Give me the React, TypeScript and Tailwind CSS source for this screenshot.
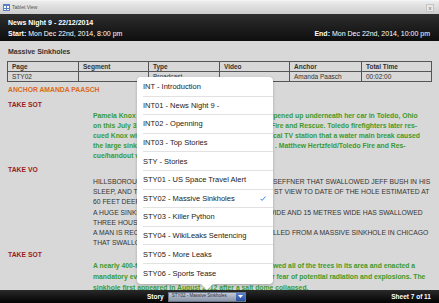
import React, { FC } from "react";

const stories = [
  "INT - Introduction",
  "INT01 - News Night 9 -",
  "INT02 - Openning",
  "INT03 - Top Stories",
  "STY - Stories",
  "STY01 - US Space Travel Alert",
  "STY02 - Massive Sinkholes",
  "STY03 - Killer Python",
  "STY04 - WikiLeaks Sentencing",
  "STY05 - More Leaks",
  "STY06 - Sports Tease",
];

// each script line: left part, where the rest continues (w), rest of the line
type Line = { l: string; w?: string; r?: string };

const greenOne: Line[] = [
  { l: "Pamela Knox was pulled from a sinkhole that ", w: "w-[176px]", r: "opened up underneath her car in Toledo, Ohio" },
  { l: "on this July 3, 2014 photo by Toledo ", w: "w-[178px]", r: "Fire and Rescue. Toledo firefighters later res-" },
  { l: "cued Knox without injury. Officials told a lo", w: "w-[180px]", r: "cal TV station that a water main break caused" },
  { l: "the large sinkhole in the street", w: "w-[182px]", r: ". Matthew Hertzfeld/Toledo Fire and Res-" },
  { l: "cue/handout via Reuters" },
];

const caps: Line[] = [
  { l: "HILLSBOROUGH COUNTY VIDEO OF THE SINKHOLE IN ", w: "w-[180px]", r: "SEFFNER THAT SWALLOWED JEFF BUSH IN HIS" },
  { l: "SLEEP, AND THIS IS THE CLOSE", w: "w-[181px]", r: "ST VIEW TO DATE OF THE HOLE ESTIMATED AT" },
  { l: "60 FEET DEEP." },
  { l: "A HUGE SINKHOLE 30 METRES DEEP, 20 METRES ", w: "w-[175px]", r: "WIDE AND 15 METRES WIDE HAS SWALLOWED" },
  { l: "THREE HOUSES." },
  { l: "A MAN IS RECOVERING AFTER HE WAS PU", w: "w-[180px]", r: "LLED FROM A MASSIVE SINKHOLE IN CHICAGO" },
  { l: "THAT SWALLOWED HIS CAR." },
];

const greenTwo: Line[] = [
  { l: "A nearly 400-foot-wide sinkhole has swallo", w: "w-[180px]", r: "wed all of the trees in its area and enacted a" },
  { l: "mandatory evacuation order fo", w: "w-[179px]", r: "r fear of potential radiation and explosions. The" },
  { l: "sinkhole first appeared in August 2012 after a salt dome collapsed." },
];

type LinesProps = { lines: Line[]; className: string };

const Lines: FC<LinesProps> = ({ lines, className }) => (
  <div className={`ml-[86px] ${className}`}>
    {lines.map((line) => (
      <div key={line.l} className="flex whitespace-nowrap">
        <span className={line.w ? `${line.w} shrink-0 overflow-hidden` : ""}>{line.l}</span>
        {line.r ? <span>{line.r}</span> : null}
      </div>
    ))}
  </div>
);

const Cue: FC<{ label: string }> = ({ label }) => (
  <div className="pl-px font-bold text-[#9c1c1c]">{label}</div>
);

export default function App() {
  return (
    <div className="relative flex h-[303px] w-[439px] flex-col overflow-hidden bg-[#d8d8d8] font-['Liberation_Sans',Arial,sans-serif]">
      {/* window title */}
      <div className="flex h-[14px] items-center justify-between border-t border-[#f4f4f4] bg-gradient-to-b from-[#ececec] to-[#cdcdcd] px-[3px]">
        <div className="flex items-center gap-[2px]">
          <svg width="7" height="7" viewBox="0 0 7 7">
            <rect x="0" y="0" width="7" height="7" fill="#5a7fc4" />
            <rect x="1" y="2" width="2" height="2" fill="#fff" />
            <rect x="4" y="2" width="2" height="2" fill="#fff" />
            <rect x="1" y="5" width="2" height="1" fill="#fff" />
            <rect x="4" y="5" width="2" height="1" fill="#fff" />
          </svg>
          <span className="text-[5px] text-[#555]">Tablet View</span>
        </div>
        <div className="mr-[2px] flex h-[8px] w-[8px] items-center justify-center border border-[#c4c4c4] bg-[#e8e8e8] text-[6px] leading-none text-[#666]">
          x
        </div>
      </div>

      {/* show header */}
      <div className="h-[27px] bg-gradient-to-b from-[#2e2e2e] to-[#0e0e0e] px-[8px] pt-[3px] text-[7px] leading-[11px] text-white">
        <div className="font-bold">News Night 9 - 22/12/2014</div>
        <div className="flex justify-between pr-[1px]">
          <span>
            <b>Start:</b> Mon Dec 22nd, 2014, 8:00 pm
          </span>
          <span>
            <b>End:</b> Mon Dec 22nd, 2014, 10:00 pm
          </span>
        </div>
      </div>

      {/* script */}
      <div className="flex-1 overflow-hidden px-[7px] pt-[6px] text-[6.8px] leading-[10px]">
        <div className="pl-px text-[7px] font-bold text-[#333]">Massive Sinkholes</div>
        <table className="mt-[4px] w-[425px] table-fixed border-collapse text-[6.5px] leading-[9px] text-[#333]">
          <thead>
            <tr className="font-bold">
              <td className="w-[71px] border border-[#555] pl-[4px]">Page</td>
              <td className="w-[70px] border border-[#555] pl-[4px]">Segment</td>
              <td className="w-[71px] border border-[#555] pl-[4px]">Type</td>
              <td className="w-[70px] border border-[#555] pl-[4px]">Video</td>
              <td className="w-[72px] border border-[#555] pl-[4px]">Anchor</td>
              <td className="border border-[#555] pl-[4px]">Total Time</td>
            </tr>
          </thead>
          <tbody>
            <tr>
              <td className="border border-[#555] pl-[4px]">STY02</td>
              <td className="border border-[#555] pl-[4px]"></td>
              <td className="border border-[#555] pl-[4px]">Broadcast</td>
              <td className="border border-[#555] pl-[4px]"></td>
              <td className="border border-[#555] pl-[4px]">Amanda Paasch</td>
              <td className="border border-[#555] pl-[4px]">00:02:00</td>
            </tr>
          </tbody>
        </table>

        <div className="mt-[3px] pl-px font-bold text-[#d86a22]">ANCHOR AMANDA PAASCH</div>

        <div className="mt-[5px]">
          <Cue label="TAKE SOT" />
          <Lines lines={greenOne} className="mt-px font-bold text-[#3c9a2e]" />
        </div>

        <div className="mt-[4px]">
          <Cue label="TAKE VO" />
          <Lines lines={caps} className="mt-[2px] leading-[10.2px] text-[#333]" />
        </div>

        <div className="mt-[2px]">
          <Cue label="TAKE SOT" />
          <Lines lines={greenTwo} className="font-bold leading-[11px] text-[#3c9a2e]" />
        </div>
      </div>

      {/* footer */}
      <div className="flex h-[13px] items-center bg-gradient-to-b from-[#2a2a2a] to-[#050505] pr-[8px] text-[6.5px] font-bold text-white">
        <div className="ml-[147px] flex items-center">
          <span>Story</span>
          <div className="ml-[4px] flex h-[10px] w-[78px] items-stretch border border-[#6a7588]">
            <div className="flex flex-1 items-center bg-gradient-to-b from-[#c3cad6] to-[#8894a8] pl-[3px] text-[4.5px] font-normal text-[#2c3340]">
              STY02 - Massive Sinkholes
            </div>
            <div className="flex w-[9px] items-center justify-center bg-gradient-to-b from-[#5f82d0] to-[#2a4f9f]">
              <svg width="5" height="3" viewBox="0 0 5 3">
                <path d="M0 0h5L2.5 3z" fill="#fff" />
              </svg>
            </div>
          </div>
        </div>
        <span className="ml-auto">Sheet 7 of 11</span>
      </div>

      {/* story picker popover */}
      <div className="absolute left-[137px] top-[77px] w-[136px]">
        <div className="rounded-[4px] bg-white py-px shadow-[0_1px_3px_rgba(0,0,0,0.25)]">
          {stories.map((s, i) => (
            <div key={s} className="flex h-[18.6px] items-center pl-[6px]">
              <div
                className={`flex h-full flex-1 items-center justify-between pr-[7px] text-[7.5px] text-[#222] ${
                  i < stories.length - 1 ? "border-b border-[#e2e2e2]" : ""
                }`}
              >
                <span>{s}</span>
                {s.startsWith("STY02") ? (
                  <svg width="6" height="5" viewBox="0 0 6 5">
                    <path d="M0.5 2.8l1.6 1.6L5.5 0.6" stroke="#2a7fe6" strokeWidth="1" fill="none" />
                  </svg>
                ) : null}
              </div>
            </div>
          ))}
        </div>
        <div className="ml-[64px] h-0 w-0 border-x-[6px] border-t-[6px] border-x-transparent border-t-white" />
      </div>
    </div>
  );
}
